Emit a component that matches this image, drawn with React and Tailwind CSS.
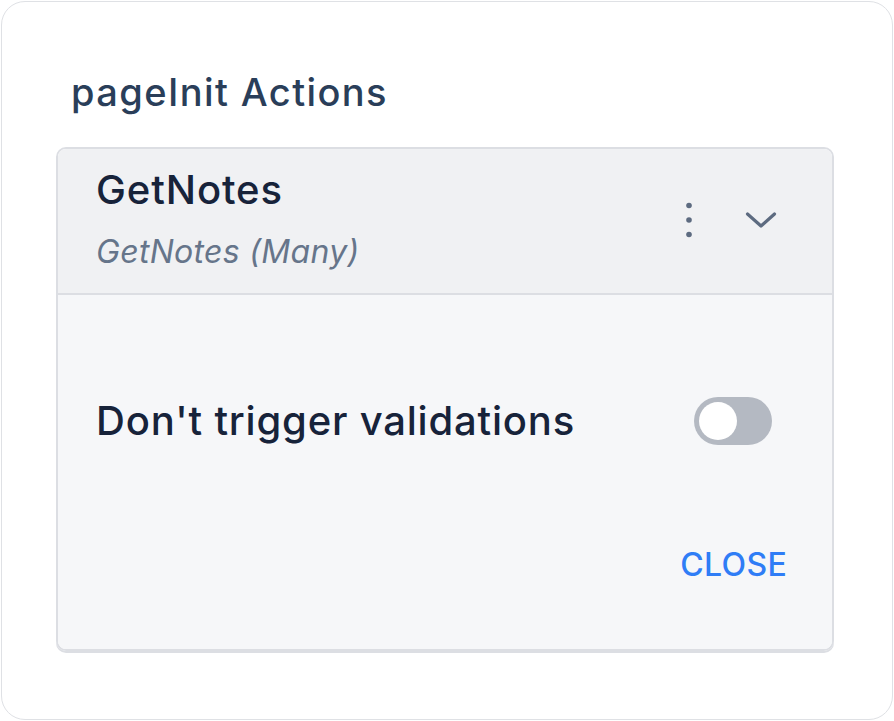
import React from 'react'

function Kebab() {
  return (
    <svg width="10" height="40" viewBox="0 0 10 40" className="text-[#5d6b80]">
      <circle cx="5" cy="5.5" r="2.8" fill="currentColor" />
      <circle cx="5" cy="20" r="2.8" fill="currentColor" />
      <circle cx="5" cy="34.5" r="2.8" fill="currentColor" />
    </svg>
  )
}

function Chevron() {
  return (
    <svg width="34" height="18" viewBox="0 0 34 18" fill="none" className="text-[#5d6b80]">
      <path d="M3.5 3 L17 15 L30.5 3" stroke="currentColor" strokeWidth="3.2" strokeLinecap="round" strokeLinejoin="round" />
    </svg>
  )
}

export default function App() {
  return (
    <div className="w-[894px] h-[721px] bg-white p-px" style={{ fontFamily: 'Inter, "Noto Sans", sans-serif' }}>
      <div className="h-full rounded-[24px] border border-[#dfe1e5] bg-white pl-[54px] pr-[58px] pt-[70px]">
        {/* Title */}
        <h1 className="text-[38px] leading-[40px] font-medium text-[#2a3e59] pl-[15px] tracking-[1.4px]">
          pageInit Actions
        </h1>

        {/* Card */}
        <div className="mt-[35px] rounded-[10px] border-2 border-[#dcdee3] overflow-hidden shadow-[0_2px_0_#dcdee3]">
          {/* Header */}
          <div className="flex items-start justify-between bg-[#f0f1f3] border-b-2 border-[#dcdee3] pl-[38px] pr-[54px] h-[146px] pt-[19px]">
            <div className="flex flex-col">
              <span className="text-[40px] leading-[44px] font-medium text-[#17233a] tracking-[0.9px]">GetNotes</span>
              <span className="mt-[21px] text-[32px] leading-[38px] italic text-[#66758a] tracking-[0.3px]">GetNotes (Many)</span>
            </div>
            <div className="flex items-center gap-[50px] mt-[32px]">
              <Kebab />
              <Chevron />
            </div>
          </div>

          {/* Body */}
          <div className="bg-[#f6f7f9] h-[354px] flex flex-col pl-[38px] pr-[45px]">
            <div className="flex items-center justify-between mt-[102px] pr-[15px]">
              <span className="text-[40px] leading-[48px] font-medium text-[#17233a] tracking-[0.8px]">Don't trigger validations</span>
              <div className="w-[78px] h-[48px] rounded-full bg-[#b4b9c2] flex items-center px-[5px]">
                <div className="w-[38px] h-[38px] rounded-full bg-white" />
              </div>
            </div>
            <div className="flex justify-end mt-[102px]">
              <button className="text-[32px] leading-[36px] font-medium text-[#2f7df6] tracking-[0.3px]">CLOSE</button>
            </div>
          </div>
        </div>
      </div>
    </div>
  )
}
